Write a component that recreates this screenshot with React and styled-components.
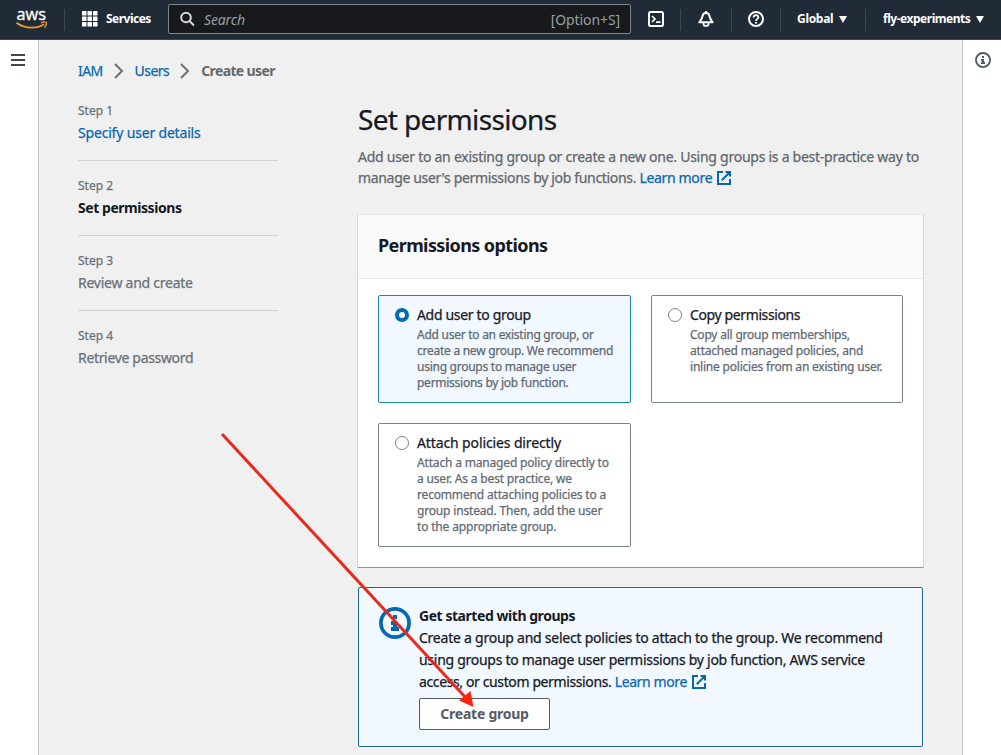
import React from "react";
import styled, { createGlobalStyle } from "styled-components";

const GlobalStyle = createGlobalStyle`
  *, *::before, *::after { box-sizing: border-box; }
  body {
    margin: 0;
    overflow: hidden;
    background: #f0f0f0;
    color: #16191f;
    font-family: "Noto Sans", "Open Sans", sans-serif;
    font-size: 14px;
    line-height: 22px;
    -webkit-text-stroke: 0.25px currentColor;
  }
  svg { display: block; flex: none; }
`;

const Track = styled.span`
  letter-spacing: ${(p) => p.$s || 0}px;
  white-space: nowrap;
  display: ${(p) => (p.$block ? "block" : "inline")};
`;

const Page = styled.div`
  position: relative;
  display: flex;
  flex-direction: column;
  height: 755px;
  width: 1001px;
  overflow: hidden;
`;

const TopBar = styled.header`
  display: flex;
  align-items: center;
  height: 40px;
  flex: none;
  background: #212b37;
  border-bottom: 1px solid #3d4650;
  color: #fff;
  font-size: 12px;
  font-weight: 700;
  line-height: 16px;
  -webkit-text-stroke: 0;
`;

const LogoCell = styled.div`
  width: 64px;
  padding-left: 16px;
  margin-top: -2px;
`;

const Separator = styled.div`
  width: 1px;
  height: 22px;
  background: #3c4652;
`;

const ServicesButton = styled.div`
  display: flex;
  align-items: center;
  gap: 8px;
  width: 103px;
  padding-left: 17px;
  margin-top: -1px;
`;

const SearchBox = styled.div`
  display: flex;
  align-items: center;
  width: 463px;
  height: 30px;
  margin-top: -2px;
  padding: 0 10px 0 11px;
  background: #17191c;
  border: 1px solid #7d8789;
  border-radius: 2px;
  color: #95a0a1;
  font-size: 14px;
  font-weight: 400;
`;

const Placeholder = styled.em`
  flex: 1;
  padding: 2px 0 0 8px;
`;

const Shortcut = styled.span`
  padding-top: 2px;
`;

const BarCell = styled.div`
  display: flex;
  align-items: center;
  justify-content: ${(p) => (p.$start ? "flex-start" : "center")};
  padding-left: ${(p) => p.$pad || 0}px;
  gap: 6px;
  width: ${(p) => p.$w}px;
  margin-top: -1px;
`;

const Body = styled.div`
  display: flex;
  flex: 1;
  min-height: 0;
`;

const Rail = styled.aside`
  display: flex;
  justify-content: center;
  width: 39px;
  flex: none;
  padding-top: ${(p) => p.$top}px;
  padding-left: ${(p) => (p.$right ? 2 : 0)}px;
  padding-right: ${(p) => (p.$right ? 0 : 2)}px;
  background: #fff;
  border-${(p) => (p.$right ? "left" : "right")}: 1px solid #c6c9cb;
  color: #545b64;
`;

const Main = styled.main`
  flex: 1;
  min-width: 0;
  padding: 20px 0 0 39px;
`;

const Breadcrumbs = styled.nav`
  display: flex;
  align-items: center;
  height: 22px;
  color: #6a7073;
`;

const Link = styled.a`
  color: #0a67ae;
`;

const Crumb = styled.b`
  color: #63696c;
  -webkit-text-stroke: 0;
`;

const Columns = styled.div`
  display: flex;
  gap: 80px;
`;

const Steps = styled.ol`
  list-style: none;
  width: 200px;
  margin: 20px 0 0;
  padding: 0;
  flex: none;
`;

const Step = styled.li`
  height: 75px;
  color: ${(p) => (p.$state === "link" ? "#0a67ae" : p.$state === "active" ? "#16191f" : "#687078")};
  font-weight: ${(p) => (p.$state === "active" ? 700 : 400)};
  ${(p) => (p.$state === "active" ? "-webkit-text-stroke: 0;" : "")}
  &:not(:last-child) {
    border-bottom: 1px solid #d0d1d3;
    margin-bottom: 16px;
    height: 59px;
  }
`;

const StepLabel = styled.div`
  height: 16px;
  margin-bottom: 4px;
  font-size: 12px;
  line-height: 17px;
  font-weight: 400;
  color: #687078;
  -webkit-text-stroke: 0.25px currentColor;
`;

const Content = styled.section`
  width: 566px;
  flex: none;
  padding-top: 20px;
`;

const Title = styled.h1`
  margin: 0;
  font-size: 28px;
  line-height: 35px;
  height: 36px;
  font-weight: 400;
`;

const Lead = styled.p`
  margin: 8px 0 26px;
  line-height: 21px;
  color: #5f686e;
`;

const ExternalSvg = styled.svg`
  && { display: inline-block; }
  margin-left: 5px;
  vertical-align: -2px;
`;

const Card = styled.section`
  margin-left: -1px;
  width: 567px;
  background: #fff;
  border: 1px solid #d3d5d7;
  border-top-color: #e4e5e5;
  border-bottom-color: #90959a;
  height: 354px;
`;

const CardHeader = styled.h2`
  height: 64px;
  margin: 0;
  padding: 18px 20px 0;
  background: #fafafa;
  border-bottom: 1px solid #e6e7e7;
  font-size: 18px;
  line-height: 24px;
  font-weight: 700;
  -webkit-text-stroke: 0;
`;

const Tiles = styled.div`
  display: grid;
  grid-template-columns: 253px 252px;
  grid-template-rows: 108px 124px;
  gap: 20px;
  padding: 16px 20px;
`;

const Tile = styled.label`
  display: flex;
  gap: 8px;
  padding: 8px 0 0 16px;
  background: ${(p) => (p.$selected ? "#f1f8ff" : "#fff")};
  border: 1px solid ${(p) => (p.$selected ? "#1b86ad" : "#7b8386")};
  border-radius: 2px;
`;

const Radio = styled.span`
  width: 14px;
  height: 14px;
  margin-top: 4px;
  flex: none;
  border: ${(p) => (p.$selected ? "4px solid #0469b3" : "1px solid #7b8386")};
  border-radius: 50%;
  background: #fff;
`;

const TileDescription = styled.div`
  padding-top: 1px;
  font-size: 12px;
  line-height: 16px;
  color: #626a72;
`;

const Alert = styled.section`
  display: flex;
  gap: 8px;
  height: 160px;
  width: 565px;
  margin-top: 19px;
  padding: 17px 20px 0;
  background: #f1f8ff;
  border: 1px solid #1c6796;
  border-radius: 2px;
`;

const AlertIcon = styled.div`
  padding-top: 2px;
`;

const AlertTitle = styled.b`
  display: block;
  -webkit-text-stroke: 0;
`;

const Button = styled.button`
  display: block;
  width: 131px;
  height: 32px;
  margin-top: 5px;
  padding: 0;
  background: #fff;
  border: 1px solid #545b64;
  border-radius: 2px;
  color: #545b64;
  font: 700 14px/22px "Noto Sans", sans-serif;
  -webkit-text-stroke: 0;
`;

const Pointer = styled.svg`
  position: absolute;
  left: 0;
  top: 0;
  pointer-events: none;
`;

const LogoWord = styled.text`
  font: 400 16.5px "Open Sans", sans-serif;
  fill: #fff;
  stroke: #fff;
  stroke-width: 0.35px;
`;

const AwsLogo = () => (
  <svg width="40" height="26" viewBox="0 0 40 26" overflow="visible">
    <LogoWord x="0.5" y="14" textLength="29.5" lengthAdjust="spacingAndGlyphs">aws</LogoWord>
    <path d="M0.5 16.8C8 22.6 20 23.4 28.3 18.3" fill="none" stroke="#f29a2e" strokeWidth="1.8" />
    <path d="M25 16.8c2-1 4.600-1 5.300-.4.6 1-.3 3.800-1.800 5.300" fill="none" stroke="#f29a2e" strokeWidth="1.3" />
  </svg>
);

const GridIcon = () => (
  <svg width="16" height="16" fill="#fff">
    {[0, 5.5, 11].map((y) => [0, 5.5, 11].map((x) => <rect key={`${x}-${y}`} x={x} y={y} width="4.500" height="4.500" rx=".5" />))}
  </svg>
);

const SearchIcon = () => (
  <svg width="16" height="16" fill="none" stroke="#d5dbdb" strokeWidth="2">
    <circle cx="6" cy="6.500" r="4.800" />
    <path d="M9.500 10l4.500 4.500" />
  </svg>
);

const ShellIcon = () => (
  <svg width="16" height="16" fill="none" stroke="#fff" strokeWidth="2">
    <rect x="1" y="1" width="14" height="14" rx="1.500" />
    <path d="M4 5l3 3-3 3M8 11.200h4.500" strokeWidth="1.700" />
  </svg>
);

const BellIcon = () => (
  <svg width="16" height="16" fill="none" stroke="#fff" strokeWidth="2" strokeLinejoin="round">
    <path d="M8 2C5.800 2 4.800 3.300 4.500 5.200 4.200 7.600 3 8.800 1.300 11.300h13.400C13 8.800 11.800 7.600 11.500 5.200 11.200 3.300 10.200 2 8 2z" />
    <path d="M8 0v2M5.500 12v1.200c0 2.300 5 2.300 5 0V12" strokeWidth="1.800" />
  </svg>
);

const HelpIcon = () => (
  <svg width="16" height="16" fill="none" stroke="#fff" strokeWidth="2">
    <circle cx="8" cy="8" r="7" />
    <path d="M5.600 6.600C5.600 3.400 10.500 3.500 10.400 6.300 10.400 7.900 8 7.800 8 10" strokeWidth="1.700" />
    <path d="M8 10.900v1.700" />
  </svg>
);

const Caret = () => (
  <svg width="8" height="7" fill="#fff"><path d="M0 0h8L4 7z" /></svg>
);

const MenuIcon = () => (
  <svg width="14" height="12" stroke="#414750" strokeWidth="2"><path d="M0 1h14M0 6h14M0 11h14" /></svg>
);

const InfoIcon = ({ size = 16, color = "#545b64" }) => (
  <svg width={size} height={size} viewBox="0 0 16 16">
    <circle cx="8" cy="8" r="7.050" fill="none" stroke={color} strokeWidth="1.850" />
    <path d="M7 4h2v2H7zM6 7h3v3h1v2H6v-2h1V9H6z" fill={color} />
  </svg>
);

const Chevron = () => (
  <svg width="32" height="16" fill="none" stroke="#6a7073" strokeWidth="2"><path d="M12 1l7 7-7 7" /></svg>
);

const ExternalIcon = () => (
  <ExternalSvg width="14" height="14" fill="none" stroke="#0a67ae" strokeWidth="2">
    <path d="M6 1H1v12h12V8M8.500 1H13v4.500M13 1L4.800 9.200" />
  </ExternalSvg>
);

const steps = [
  { title: "Specify user details", state: "link", s: -0.18 },
  { title: "Set permissions", state: "active", s: -0.45 },
  { title: "Review and create", state: "idle", s: -0.25 },
  { title: "Retrieve password", state: "idle", s: -0.33 },
];

const options = [
  {
    title: "Add user to group",
    selected: true,
    s: -0.33,
    lineTrack: -0.26,
    lines: ["Add user to an existing group, or", "create a new group. We recommend", "using groups to manage user", "permissions by job function."],
  },
  {
    title: "Copy permissions",
    s: -0.38,
    lineTrack: -0.21,
    lines: ["Copy all group memberships,", "attached managed policies, and", "inline policies from an existing user."],
  },
  {
    title: "Attach policies directly",
    s: -0.12,
    lineTrack: -0.17,
    lines: ["Attach a managed policy directly to", "a user. As a best practice, we", "recommend attaching policies to a", "group instead. Then, add the user", "to the appropriate group."],
  },
];

export default function App() {
  return (
    <Page>
      <GlobalStyle />
      <TopBar>
        <LogoCell><AwsLogo /></LogoCell>
        <Separator />
        <ServicesButton><GridIcon /><Track $s={-0.52}>Services</Track></ServicesButton>
        <SearchBox>
          <SearchIcon />
          <Placeholder><Track $s={-0.15}>Search</Track></Placeholder>
          <Shortcut><Track $s={-0.1}>[Option+S]</Track></Shortcut>
        </SearchBox>
        <BarCell $w={49}><ShellIcon /></BarCell>
        <Separator />
        <BarCell $w={50}><BellIcon /></BarCell>
        <Separator />
        <BarCell $w={48}><HelpIcon /></BarCell>
        <Separator />
        <BarCell $start $pad={16} $w={84}><Track $s={-0.3}>Global</Track><Caret /></BarCell>
        <Separator />
        <BarCell $start $pad={17} $w={135}><Track $s={-0.47}>fly-experiments</Track><Caret /></BarCell>
      </TopBar>
      <Body>
        <Rail $top={14}><MenuIcon /></Rail>
        <Main>
          <Breadcrumbs>
            <Link><Track $s={-0.6}>IAM</Track></Link><Chevron />
            <Link><Track $s={-0.55}>Users</Track></Link><Chevron />
            <Crumb><Track $s={-0.62}>Create user</Track></Crumb>
          </Breadcrumbs>
          <Columns>
            <Steps>
              {steps.map((step, i) => (
                <Step key={step.title} $state={step.state}>
                  <StepLabel>Step {i + 1}</StepLabel>
                  <Track $block $s={step.s}>{step.title}</Track>
                </Step>
              ))}
            </Steps>
            <Content>
              <Title><Track $s={-0.65}>Set permissions</Track></Title>
              <Lead>
                <Track $block $s={-0.26}>Add user to an existing group or create a new one. Using groups is a best-practice way to</Track>
                <Track $block $s={-0.33}>
                  manage user's permissions by job functions. <Link>Learn more<ExternalIcon /></Link>
                </Track>
              </Lead>
              <Card>
                <CardHeader><Track $s={-0.6}>Permissions options</Track></CardHeader>
                <Tiles>
                  {options.map((option) => (
                    <Tile key={option.title} $selected={option.selected}>
                      <Radio $selected={option.selected} />
                      <div>
                        <Track $block $s={option.s}>{option.title}</Track>
                        <TileDescription>
                          {option.lines.map((line) => <Track key={line} $block $s={option.lineTrack}>{line}</Track>)}
                        </TileDescription>
                      </div>
                    </Tile>
                  ))}
                </Tiles>
              </Card>
              <Alert>
                <AlertIcon><InfoIcon size={32} color="#0469b3" /></AlertIcon>
                <div>
                  <AlertTitle><Track $s={-0.45}>Get started with groups</Track></AlertTitle>
                  <Track $block $s={-0.24}>Create a group and select policies to attach to the group. We recommend</Track>
                  <Track $block $s={-0.28}>using groups to manage user permissions by job function, AWS service</Track>
                  <Track $block $s={-0.38}>
                    access, or custom permissions. <Link>Learn more<ExternalIcon /></Link>
                  </Track>
                  <Button><Track $s={-0.25}>Create group</Track></Button>
                </div>
              </Alert>
            </Content>
          </Columns>
        </Main>
        <Rail $right $top={12}><InfoIcon /></Rail>
      </Body>
      <Pointer width="1001" height="755">
        <path d="M222 434L466 698" stroke="#e8291c" strokeWidth="3" />
        <path d="M473.500 707L459 700.500L470.500 691z" fill="#ff2412" />
      </Pointer>
    </Page>
  );
}
